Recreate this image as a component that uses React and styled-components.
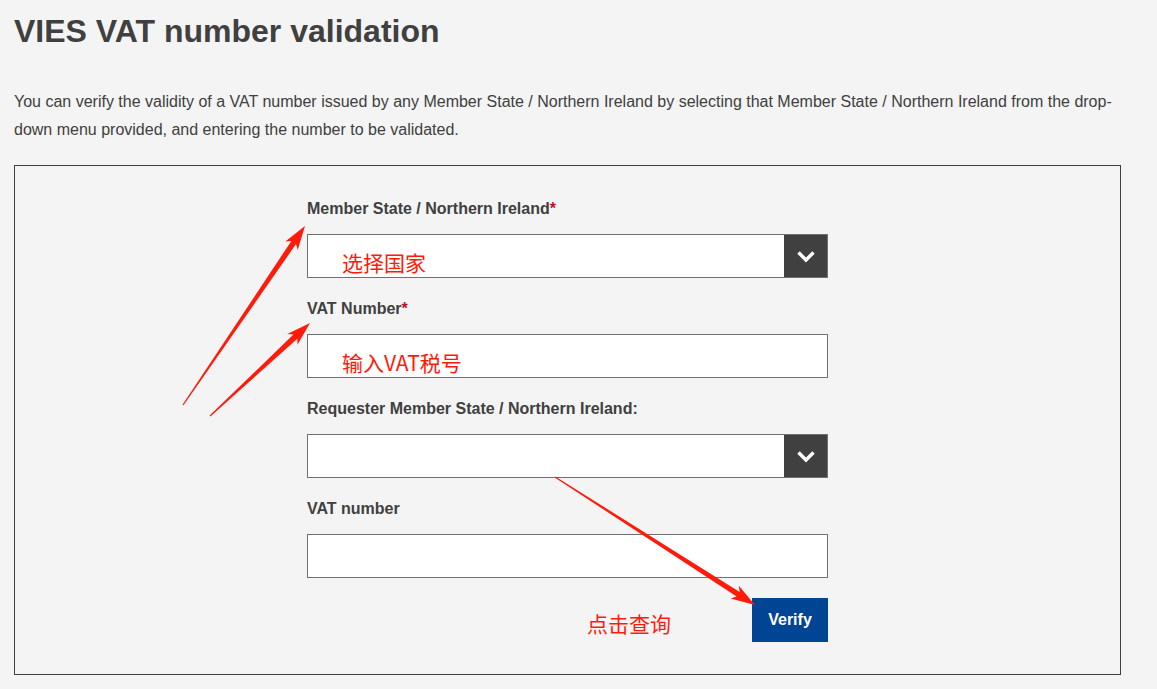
import styled, { createGlobalStyle } from "styled-components";

const GlobalStyle = createGlobalStyle`
  body {
    margin: 0;
    background: #f4f4f4;
    font-family: Arial, "Liberation Sans", "Noto Sans CJK SC", sans-serif;
    color: #404040;
  }
`;

const Page = styled.div`
  position: relative;
  padding: 13px 36px 15px 14px;
  min-height: 689px;
  box-sizing: border-box;
`;

const Title = styled.h1`
  margin: 0;
  font-size: 32px;
  font-weight: 700;
  line-height: 36px;
  color: #404040;
`;

const Intro = styled.p`
  margin: 39px 0 21px;
  font-size: 16px;
  line-height: 28px;
`;

const Panel = styled.div`
  border: 1px solid #404040;
  height: 510px;
  box-sizing: border-box;
  padding: 29px 0 0;
  display: flex;
  justify-content: center;
`;

const Form = styled.div`
  width: 521px;
  display: flex;
  flex-direction: column;
  gap: 17px;
`;

const Field = styled.div`
  display: flex;
  flex-direction: column;
`;

const Label = styled.div`
  font-size: 16px;
  font-weight: 700;
  line-height: 28px;
  height: 39px;
  color: #404040;
`;

const Required = styled.span`
  color: #c0121c;
`;

const Box = styled.div`
  height: 44px;
  box-sizing: border-box;
  background: #fff;
  border: 1px solid #707070;
  display: flex;
  align-items: stretch;
`;

const Hint = styled.div`
  flex: 1;
  padding: 12px 0 0 34px;
  font-size: 21px;
  line-height: 30px;
  color: #ff1a0a;
  font-family: "Noto Sans CJK SC", Arial, sans-serif;
  font-weight: 400;
`;

const Caret = styled.div`
  width: 43px;
  background: #404040;
  display: flex;
  align-items: center;
  justify-content: center;
`;

const Actions = styled.div`
  display: flex;
  align-items: center;
  justify-content: flex-end;
  margin-top: 3px;
`;

const Note = styled.span`
  font-family: "Noto Sans CJK SC", sans-serif;
  font-size: 21px;
  color: #ff1a0a;
  margin-right: 81px;
  padding-top: 6px;
`;

const VerifyButton = styled.button`
  width: 76px;
  height: 44px;
  border: none;
  background: #004494;
  color: #fff;
  font-family: Arial, "Liberation Sans", sans-serif;
  font-size: 16px;
  font-weight: 700;
  cursor: pointer;
`;

const Overlay = styled.svg`
  position: absolute;
  left: 0;
  top: 0;
  pointer-events: none;
`;

function Chevron() {
  return (
    <svg width="20" height="13" viewBox="0 0 20 13">
      <path d="M2.5 2.5 L10 10 L17.5 2.5" fill="none" stroke="#fff" strokeWidth="3.4" />
    </svg>
  );
}

function arrowPoints(x1, y1, x2, y2) {
  const dx = x2 - x1;
  const dy = y2 - y1;
  const len = Math.hypot(dx, dy);
  const ux = dx / len;
  const uy = dy / len;
  const nx = -uy;
  const ny = ux;
  const head = 20;
  const neck = [x2 - ux * head, y2 - uy * head];
  const barb = [x2 - ux * (head + 4), y2 - uy * (head + 4)];
  const p = (x, y) => `${x.toFixed(1)},${y.toFixed(1)}`;
  return [
    p(x1 + nx * 0.6, y1 + ny * 0.6),
    p(neck[0] + nx * 2.8, neck[1] + ny * 2.8),
    p(barb[0] + nx * 7.5, barb[1] + ny * 7.5),
    p(x2, y2),
    p(barb[0] - nx * 7.5, barb[1] - ny * 7.5),
    p(neck[0] - nx * 2.8, neck[1] - ny * 2.8),
    p(x1 - nx * 0.6, y1 - ny * 0.6),
  ].join(" ");
}

const arrows = [
  [183, 405, 305, 226],
  [210, 416, 310, 323],
  [555, 477, 755, 605],
];

const fields = [
  { label: "Member State / Northern Ireland", required: true, select: true, hint: "选择国家" },
  { label: "VAT Number", required: true, hint: "输入VAT税号" },
  { label: "Requester Member State / Northern Ireland:", select: true },
  { label: "VAT number" },
];

export default function App() {
  return (
    <Page>
      <GlobalStyle />
      <Title>VIES VAT number validation</Title>
      <Intro>
        You can verify the validity of a VAT number issued by any Member State / Northern Ireland
        by selecting that Member State / Northern Ireland from the drop-down menu provided, and
        entering the number to be validated.
      </Intro>
      <Panel>
        <Form>
          {fields.map((f) => (
            <Field key={f.label}>
              <Label>
                {f.label}
                {f.required && <Required>*</Required>}
              </Label>
              <Box>
                <Hint>{f.hint}</Hint>
                {f.select && (
                  <Caret>
                    <Chevron />
                  </Caret>
                )}
              </Box>
            </Field>
          ))}
          <Actions>
            <Note>点击查询</Note>
            <VerifyButton>Verify</VerifyButton>
          </Actions>
        </Form>
      </Panel>
      <Overlay width="1157" height="689">
        {arrows.map((a, i) => (
          <polygon key={i} points={arrowPoints(...a)} fill="#ff1a0a" />
        ))}
      </Overlay>
    </Page>
  );
}
